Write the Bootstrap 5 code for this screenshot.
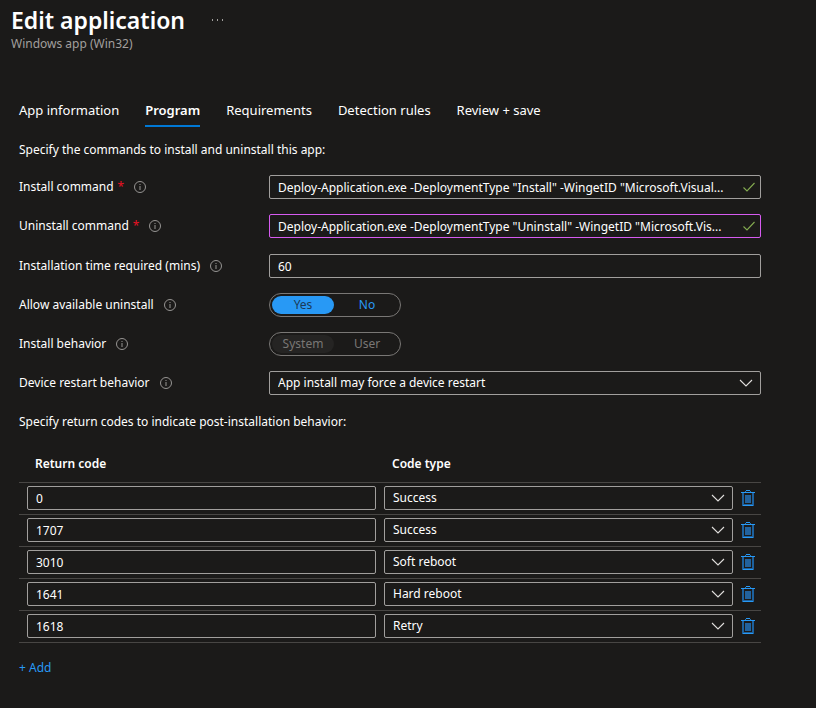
<!DOCTYPE html>
<html lang="en" data-bs-theme="dark">
<head>
<meta charset="utf-8">
<meta name="viewport" content="width=device-width, initial-scale=1">
<title>Edit application</title>
<link href="https://cdn.jsdelivr.net/npm/bootstrap@5.3.0/dist/css/bootstrap.min.css" rel="stylesheet">
<style>
  body { background: #1b1a19; color: #fff; font: 12px/20px "Segoe UI", "Noto Sans", "Open Sans", sans-serif; }
  .page-head { padding: 5px 11px 0; }
  .page-title { font-size: 23px; line-height: 30px; font-weight: 600; color: #fff; }
  .page-sub { font-size: 12px; line-height: 18px; color: #a19f9d; }
  .more-btn { margin-left: 27px; color: #a19f9d; }
  .page-body { padding: 47px 55px 24px 19px; }
  .step-tabs { gap: 26px; font-size: 13px; }
  .step-tabs .nav-link { padding: 0 0 5px; color: #fff; border-bottom: 2px solid transparent; }
  .step-tabs .nav-link.active { font-weight: 600; border-color: #0078d4; }
  .intro { margin: 13px 0 15px; }
  .form-rows { display: grid; gap: 15px; }
  .form-rows + .form-rows { margin-top: 16px; }
  .form-line { display: grid; grid-template-columns: 250px 1fr; align-items: center; }
  .req { color: #e81123; margin-left: 4px; }
  .info-icon { width: 12px; height: 12px; margin-left: 10px; color: #979593; }
  .field { height: 24px; min-height: 24px; padding: 0 8px; font-size: 12px; line-height: 20px; color: #fff; background-color: #1b1a19; border: 1px solid #a19f9d; border-radius: 2px; }
  .field:focus { color: #fff; background-color: #1b1a19; box-shadow: none; border-color: #2899f5; }
  select.field { background-image: none; padding-right: 30px; }
  .cmd { padding-right: 22px; text-overflow: ellipsis; }
  .cmd.edited { border-color: #d65bf0; }
  .over-icon { position: absolute; pointer-events: none; top: 5px; }
  .over-check { right: 5px; width: 14px; height: 14px; color: #84ab50; }
  .over-chevron { right: 8px; width: 14px; height: 14px; color: #e1dfdd; }
  .switch-pill { border: 1px solid #797775; border-radius: 12px; padding: 2px; gap: 2px; width: max-content; }
  .switch-pill label { width: 62px; height: 18px; border-radius: 9px; line-height: 18px; text-align: center; color: #2899f5; cursor: pointer; }
  .switch-pill .btn-check:checked + label { background: #2899f5; color: #1b3a57; }
  .switch-pill .btn-check:disabled + label { color: #797775; cursor: default; }
  .switch-pill .btn-check:checked:disabled + label { background: #252423; color: #797775; }
  .codes-intro { margin: 17px 0 20px; }
  .codes { width: 100%; table-layout: fixed; border-collapse: separate; border-spacing: 0; }
  .codes th { font-weight: 600; padding: 0 16px 8px; height: 31px; vertical-align: bottom; border-bottom: 1px solid #484644; }
  .codes td { padding: 3px 0 4px 8px; border-bottom: 1px solid #484644; }
  .codes .col-del { width: 28px; padding: 0; }
  .del-btn { display: block; line-height: 0; color: #2899f5; }
  .add-btn { margin-top: 15px; color: #2899f5; font-size: 12px; line-height: 20px; }
</style>
<script src="https://cdn.jsdelivr.net/npm/bootstrap@5.3.0/dist/js/bootstrap.bundle.min.js"></script>
</head>
<body>
<svg class="d-none" aria-hidden="true">
  <symbol id="i-info" viewBox="0 0 12 12"><circle cx="6" cy="6" r="5.5" fill="none" stroke="currentColor"/><path d="M5.5 3h1v1h-1zM5.5 5h1v4h-1z" fill="currentColor"/></symbol>
  <symbol id="i-check" viewBox="0 0 14 14"><path d="M1.5 7.5 5 11l7.5-8" fill="none" stroke="currentColor" stroke-width="1.1"/></symbol>
  <symbol id="i-chev" viewBox="0 0 14 14"><path d="M1 4l6 6 6-6" fill="none" stroke="currentColor" stroke-width="1.1"/></symbol>
  <symbol id="i-trash" viewBox="0 0 14 16"><path d="M2 3v12h10V3" fill="none" stroke="#1d609c" stroke-width="2"/><path d="M4 5h6v8H4z" fill="#22629d"/><path d="M0 2h14v1H0zM2 15h10v1H2zM5 0h4v1H5z" fill="currentColor"/><path d="M4 1h1v1H4zM9 1h1v1H9z" fill="#1d75bd"/></symbol>
</svg>

<header class="page-head">
  <div class="d-flex align-items-center">
    <h1 class="page-title mb-0">Edit application</h1>
    <button type="button" class="more-btn btn p-0 border-0 lh-1" aria-label="More actions"><svg class="d-block" width="11" height="2" fill="currentColor" aria-hidden="true"><path d="M0 0h1v2H0zM5 0h1v2H5zM10 0h1v2h-1z"/></svg></button>
  </div>
  <div class="page-sub">Windows app (Win32)</div>
</header>

<main class="page-body">
  <nav class="nav step-tabs" aria-label="Steps">
    <a class="nav-link" href="#">App information</a>
    <a class="nav-link active" href="#" aria-current="page">Program</a>
    <a class="nav-link" href="#">Requirements</a>
    <a class="nav-link" href="#">Detection rules</a>
    <a class="nav-link" href="#">Review + save</a>
  </nav>

  <p class="intro">Specify the commands to install and uninstall this app:</p>

  <form>
    <div class="form-rows">
      <div class="form-line">
        <div class="d-flex align-items-center"><label for="install">Install command<span class="req">*</span></label><svg class="info-icon"><use href="#i-info"/></svg></div>
        <div class="position-relative"><input id="install" type="text" class="form-control field cmd" value="Deploy-Application.exe -DeploymentType &quot;Install&quot; -WingetID &quot;Microsoft.Visual..."><svg class="over-icon over-check"><use href="#i-check"/></svg></div>
      </div>
      <div class="form-line">
        <div class="d-flex align-items-center"><label for="uninstall">Uninstall command<span class="req">*</span></label><svg class="info-icon"><use href="#i-info"/></svg></div>
        <div class="position-relative"><input id="uninstall" type="text" class="form-control field cmd edited" value="Deploy-Application.exe -DeploymentType &quot;Uninstall&quot; -WingetID &quot;Microsoft.Vis..."><svg class="over-icon over-check"><use href="#i-check"/></svg></div>
      </div>
    </div>
    <div class="form-rows">
      <div class="form-line">
        <div class="d-flex align-items-center"><label for="mins">Installation time required (mins)</label><svg class="info-icon"><use href="#i-info"/></svg></div>
        <input id="mins" type="text" class="form-control field" value="60">
      </div>
      <div class="form-line">
        <div class="d-flex align-items-center"><span id="allow-label">Allow available uninstall</span><svg class="info-icon"><use href="#i-info"/></svg></div>
        <div class="switch-pill d-flex" role="radiogroup" aria-labelledby="allow-label">
          <input class="btn-check" type="radio" name="allow" id="allow-yes" checked><label for="allow-yes">Yes</label>
          <input class="btn-check" type="radio" name="allow" id="allow-no"><label for="allow-no">No</label>
        </div>
      </div>
      <div class="form-line">
        <div class="d-flex align-items-center"><span id="behavior-label">Install behavior</span><svg class="info-icon"><use href="#i-info"/></svg></div>
        <div class="switch-pill d-flex" role="radiogroup" aria-labelledby="behavior-label">
          <input class="btn-check" type="radio" name="behavior" id="as-system" checked disabled><label for="as-system">System</label>
          <input class="btn-check" type="radio" name="behavior" id="as-user" disabled><label for="as-user">User</label>
        </div>
      </div>
      <div class="form-line">
        <div class="d-flex align-items-center"><label for="restart">Device restart behavior</label><svg class="info-icon"><use href="#i-info"/></svg></div>
        <div class="position-relative"><select id="restart" class="form-select field"><option>App install may force a device restart</option></select><svg class="over-icon over-chevron"><use href="#i-chev"/></svg></div>
      </div>
    </div>
  </form>

  <p class="codes-intro">Specify return codes to indicate post-installation behavior:</p>

  <table class="codes">
    <thead><tr><th scope="col">Return code</th><th scope="col">Code type</th><th class="col-del"></th></tr></thead>
    <tbody>
      <tr>
        <td><input type="text" class="form-control field" aria-label="Return code" value="0"></td>
        <td><div class="position-relative"><select class="form-select field" aria-label="Code type"><option>Success</option></select><svg class="over-icon over-chevron"><use href="#i-chev"/></svg></div></td>
        <td><button type="button" class="btn p-0 border-0 del-btn" aria-label="Delete"><svg width="14" height="16"><use href="#i-trash"/></svg></button></td>
      </tr>
      <tr>
        <td><input type="text" class="form-control field" aria-label="Return code" value="1707"></td>
        <td><div class="position-relative"><select class="form-select field" aria-label="Code type"><option>Success</option></select><svg class="over-icon over-chevron"><use href="#i-chev"/></svg></div></td>
        <td><button type="button" class="btn p-0 border-0 del-btn" aria-label="Delete"><svg width="14" height="16"><use href="#i-trash"/></svg></button></td>
      </tr>
      <tr>
        <td><input type="text" class="form-control field" aria-label="Return code" value="3010"></td>
        <td><div class="position-relative"><select class="form-select field" aria-label="Code type"><option>Soft reboot</option></select><svg class="over-icon over-chevron"><use href="#i-chev"/></svg></div></td>
        <td><button type="button" class="btn p-0 border-0 del-btn" aria-label="Delete"><svg width="14" height="16"><use href="#i-trash"/></svg></button></td>
      </tr>
      <tr>
        <td><input type="text" class="form-control field" aria-label="Return code" value="1641"></td>
        <td><div class="position-relative"><select class="form-select field" aria-label="Code type"><option>Hard reboot</option></select><svg class="over-icon over-chevron"><use href="#i-chev"/></svg></div></td>
        <td><button type="button" class="btn p-0 border-0 del-btn" aria-label="Delete"><svg width="14" height="16"><use href="#i-trash"/></svg></button></td>
      </tr>
      <tr>
        <td><input type="text" class="form-control field" aria-label="Return code" value="1618"></td>
        <td><div class="position-relative"><select class="form-select field" aria-label="Code type"><option>Retry</option></select><svg class="over-icon over-chevron"><use href="#i-chev"/></svg></div></td>
        <td><button type="button" class="btn p-0 border-0 del-btn" aria-label="Delete"><svg width="14" height="16"><use href="#i-trash"/></svg></button></td>
      </tr>
    </tbody>
  </table>
  <button type="button" class="btn p-0 border-0 add-btn">+ Add</button>
</main>
</body>
</html>
